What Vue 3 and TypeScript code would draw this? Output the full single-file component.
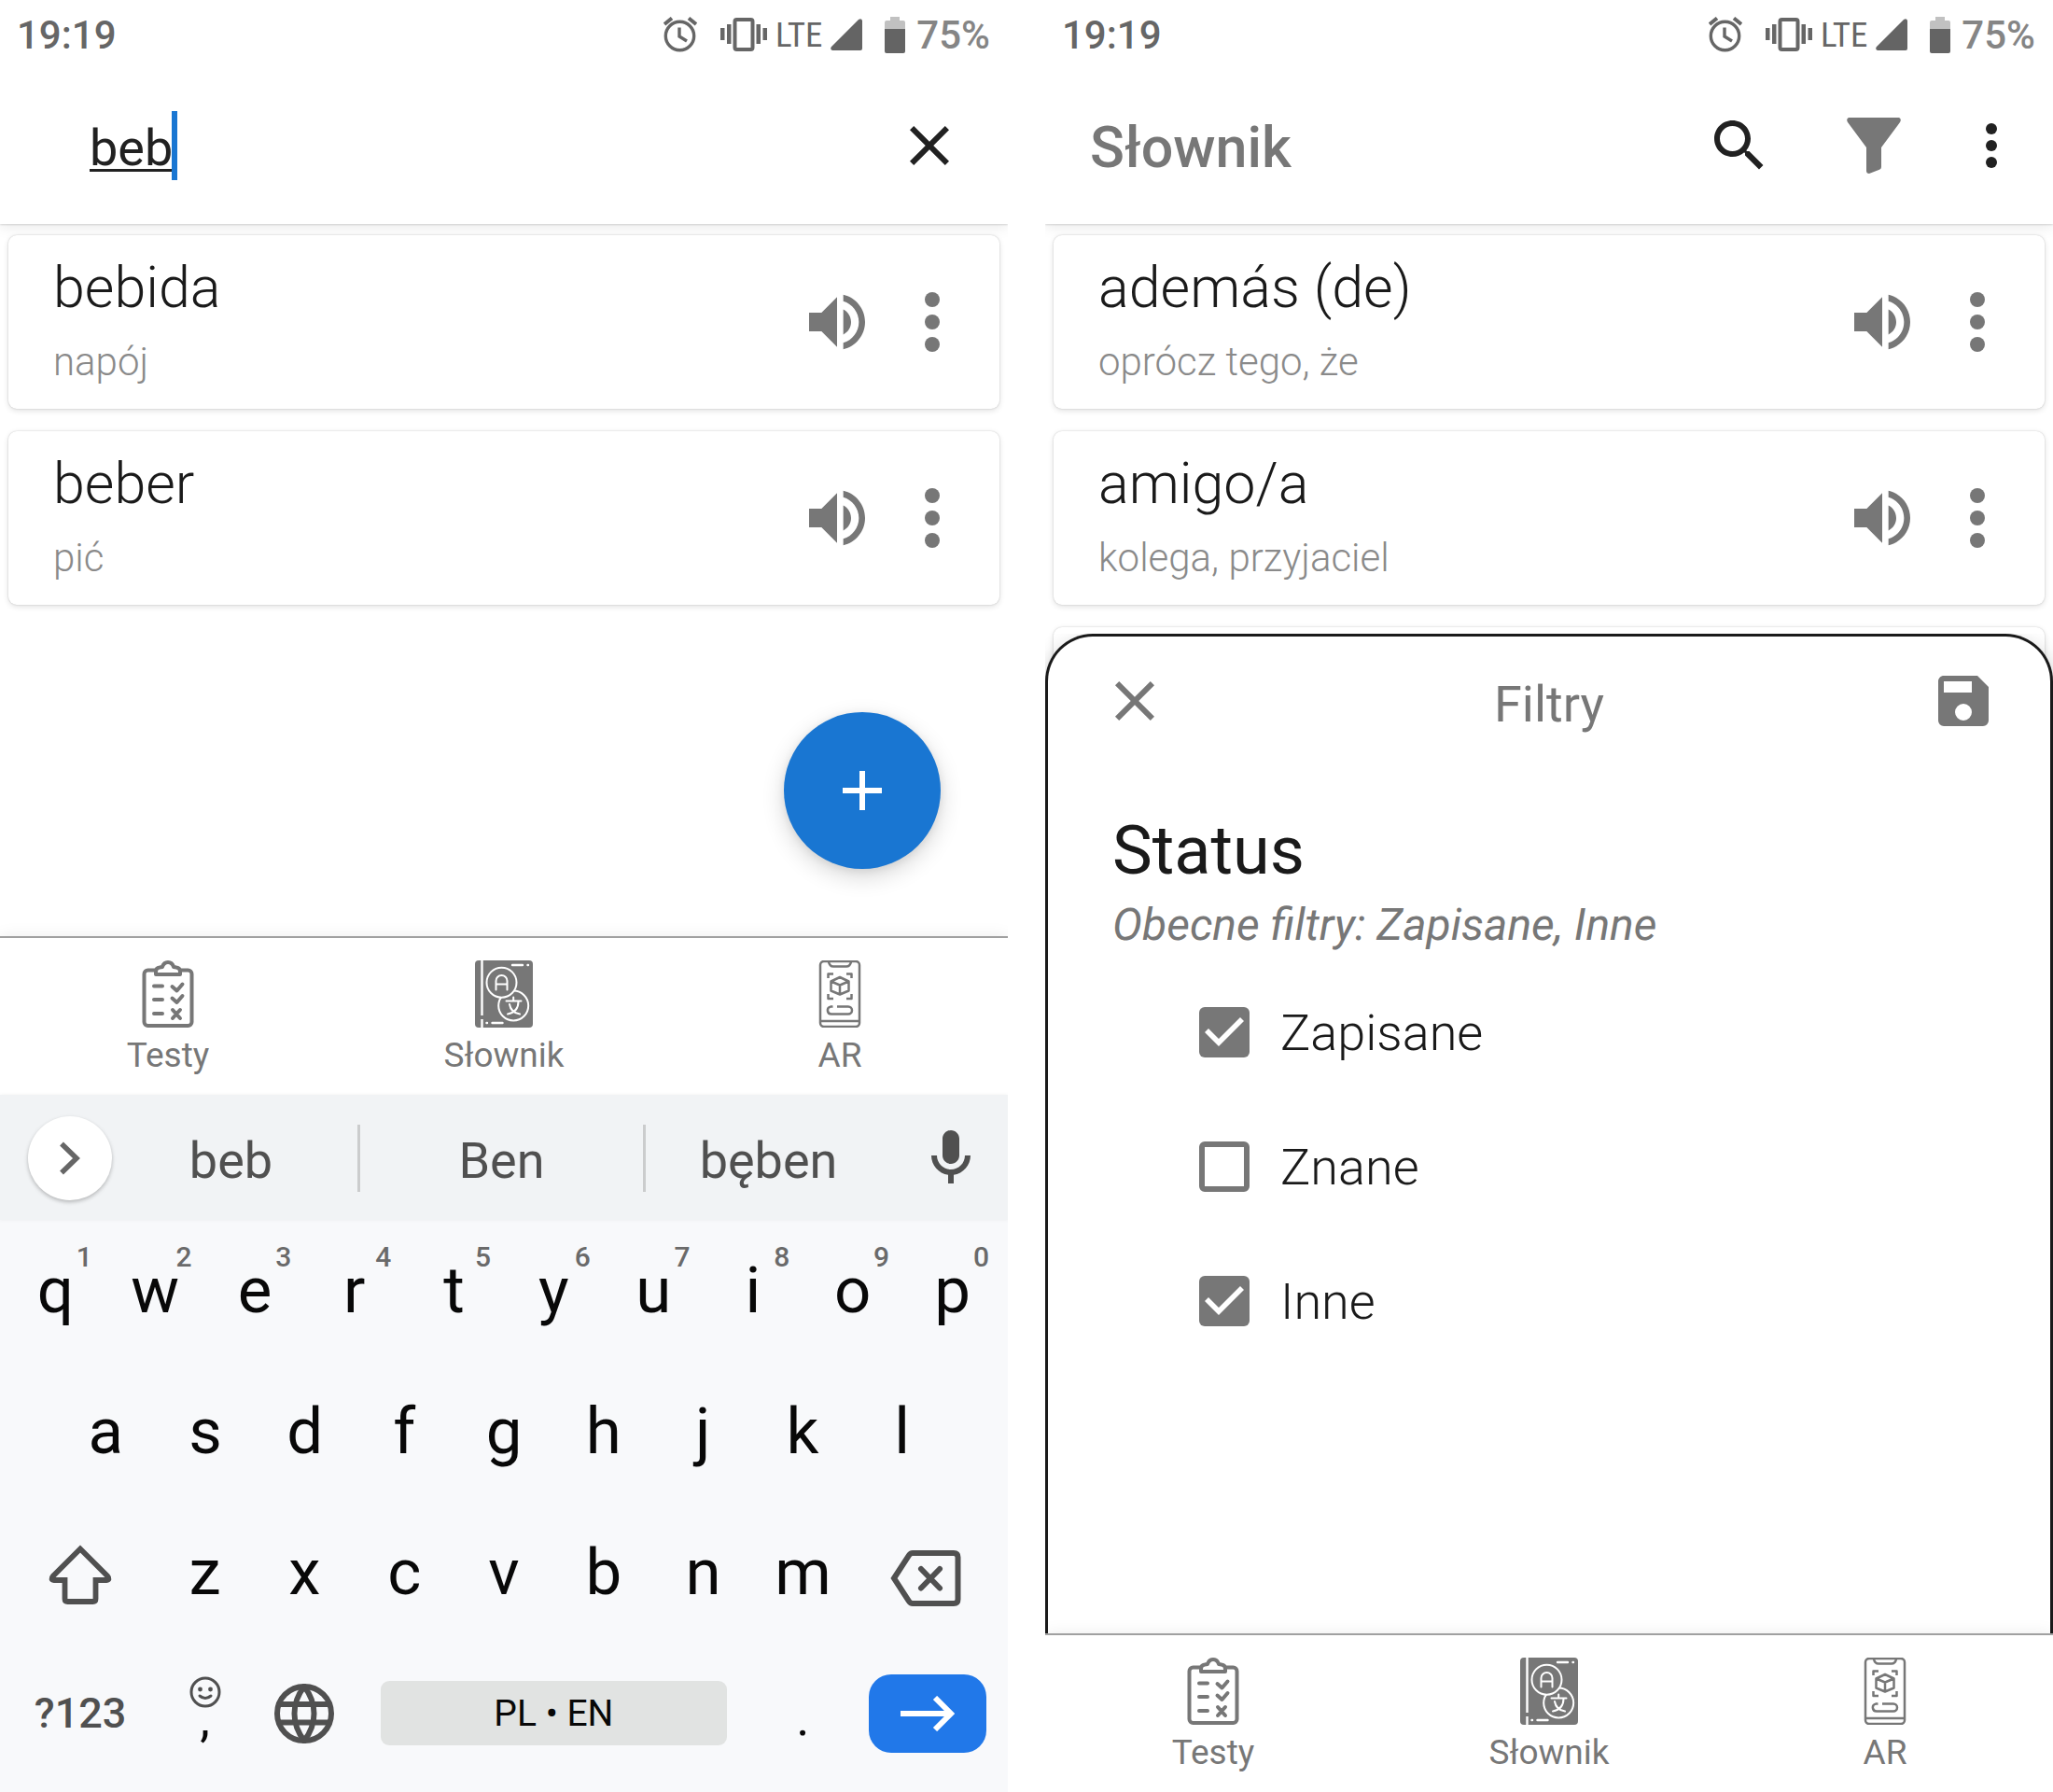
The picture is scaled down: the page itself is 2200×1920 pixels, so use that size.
<script setup lang="ts">
import { ref, computed } from 'vue'

interface Entry {
  word: string
  meaning: string
}

interface Filter {
  id: string
  label: string
  on: boolean
}

interface Screen {
  id: string
  searching: boolean
  entries: Entry[]
}

const screens: Screen[] = [
  {
    id: 'search',
    searching: true,
    entries: [
      { word: 'bebida', meaning: 'napój' },
      { word: 'beber', meaning: 'pić' },
    ],
  },
  {
    id: 'filters',
    searching: false,
    entries: [
      { word: 'además (de)', meaning: 'oprócz tego, że' },
      { word: 'amigo/a', meaning: 'kolega, przyjaciel' },
      { word: '', meaning: '' },
    ],
  },
]

const tabs = ['Testy', 'Słownik', 'AR']
const query = ref('beb')
const suggestions = ['beb', 'Ben', 'bęben']
const topRow = 'qwertyuiop'.split('')
const middleRow = 'asdfghjkl'.split('')
const bottomRow = 'zxcvbnm'.split('')

const filters = ref<Filter[]>([
  { id: 'saved', label: 'Zapisane', on: true },
  { id: 'known', label: 'Znane', on: false },
  { id: 'other', label: 'Inne', on: true },
])

const activeFilters = computed(() =>
  filters.value.filter((f) => f.on).map((f) => f.label).join(', '),
)
</script>

<template>
  <main class="page">
    <section v-for="screen in screens" :key="screen.id" class="phone">
      <div class="status-bar">
        <span class="clock">19:19</span>
        <svg class="alarm" width="36" height="38" viewBox="0 0 36 38" fill="none" stroke="#666" stroke-width="3.4">
          <circle cx="17.500" cy="20.500" r="15.200" />
          <path d="M17 11.500V21l8 5" />
          <path d="M1 8l8-6.500M35 8l-8-6.500" stroke-width="4" />
        </svg>
        <svg class="vibrate" width="50" height="36" viewBox="0 0 50 36">
          <rect x="15.500" y="2" width="19" height="32" rx="2" fill="none" stroke="#666" stroke-width="4" />
          <path d="M7 7h4.500v21H7zM38.500 7H43v21h-4.500zM0 11h4.500v13H0zM45.500 11H50v13h-4.500z" fill="#666" />
        </svg>
        <span class="network">LTE</span>
        <svg class="signal" width="34" height="34" viewBox="0 0 34 34">
          <path d="M2 34q-3-1-1-4L30 1q3-2 4 1v30q0 2-2 2z" fill="#646464" />
        </svg>
        <svg class="battery" width="22" height="39" viewBox="0 0 22 39">
          <path d="M6 0h10v4h4q2 0 2 2v8H0V6q0-2 2-2h4z" fill="#c1c1c1" />
          <path d="M0 13h22v24q0 2-2 2H2q-2 0-2-2z" fill="#646464" />
        </svg>
        <span class="charge">75%</span>
      </div>

      <header class="toolbar">
        <template v-if="screen.searching">
          <div class="search">
            <input v-model="query" type="text" aria-label="Szukaj" spellcheck="false" />
            <i class="caret"></i>
          </div>
          <button class="action" type="button" aria-label="Wyczyść">
            <svg width="72" height="72" viewBox="0 0 24 24" fill="#212121">
              <path d="M19 6.410L17.590 5 12 10.590 6.410 5 5 6.410 10.590 12 5 17.590 6.410 19 12 13.410 17.590 19 19 17.590 13.410 12z" />
            </svg>
          </button>
        </template>
        <template v-else>
          <h1>Słownik</h1>
          <button class="action" type="button" aria-label="Szukaj">
            <svg width="72" height="72" viewBox="0 0 24 24" fill="#212121">
              <path d="M15.500 14h-.79l-.28-.27C15.410 12.590 16 11.110 16 9.500 16 5.910 13.090 3 9.500 3S3 5.910 3 9.500 5.910 16 9.500 16c1.610 0 3.090-.59 4.230-1.570l.27.28v.79l5 4.990L20.490 19l-4.990-5zm-6 0C7.010 14 5 11.990 5 9.500S7.010 5 9.500 5 14 7.010 14 9.500 11.990 14 9.500 14z" />
            </svg>
          </button>
          <button class="action" type="button" aria-label="Filtry">
            <svg width="60" height="60" viewBox="0 0 60 60" fill="#777">
              <path d="M3 0H57q3 1.500 1 5L38 32V53q0 2-2 2.800L25 60q-3 0-3-3V32L2 5Q0 1.500 3 0z" />
            </svg>
          </button>
          <button class="action narrow" type="button" aria-label="Więcej">
            <svg width="72" height="72" viewBox="0 0 24 24" fill="#212121">
              <circle cx="12" cy="6" r="2" /><circle cx="12" cy="12" r="2" /><circle cx="12" cy="18" r="2" />
            </svg>
          </button>
        </template>
      </header>

      <div class="content">
        <ul class="entries">
          <li v-for="(entry, n) in screen.entries" :key="n" class="entry">
            <template v-if="entry.word">
              <div class="words">
                <span class="word">{{ entry.word }}</span>
                <span class="meaning">{{ entry.meaning }}</span>
              </div>
              <button type="button" aria-label="Odtwórz">
                <svg width="80" height="80" viewBox="0 0 24 24" fill="#777">
                  <path d="M3 9v6h4l5 5V4L7 9H3zm13.500 3c0-1.770-1.020-3.290-2.500-4.030v8.050c1.480-.73 2.500-2.250 2.500-4.020zM14 3.230v2.060c2.890.86 5 3.540 5 6.710s-2.110 5.850-5 6.710v2.060c4.010-.91 7-4.490 7-8.770s-2.990-7.860-7-8.770z" />
                </svg>
              </button>
              <button type="button" aria-label="Więcej">
                <svg width="96" height="96" viewBox="0 0 24 24" fill="#777">
                  <circle cx="12" cy="6" r="2" /><circle cx="12" cy="12" r="2" /><circle cx="12" cy="18" r="2" />
                </svg>
              </button>
            </template>
          </li>
        </ul>

        <button v-if="screen.searching" class="fab" type="button" aria-label="Dodaj">
          <svg width="42" height="42" viewBox="0 0 42 42" fill="#fff"><path d="M18 0h6v18h18v6H24v18h-6V24H0v-6h18z" /></svg>
        </button>

        <div v-else class="sheet-frame">
          <section class="sheet">
            <div class="sheet-head">
              <button type="button" aria-label="Zamknij">
                <svg width="72" height="72" viewBox="0 0 24 24" fill="#777">
                  <path d="M19 6.410L17.590 5 12 10.590 6.410 5 5 6.410 10.590 12 5 17.590 6.410 19 12 13.410 17.590 19 19 17.590 13.410 12z" />
                </svg>
              </button>
              <h2>Filtry</h2>
              <button type="button" aria-label="Zapisz">
                <svg width="72" height="72" viewBox="0 0 24 24" fill="#777">
                  <path d="M15,9H5V5H15M12,19A3,3 0 0,1 9,16A3,3 0 0,1 12,13A3,3 0 0,1 15,16A3,3 0 0,1 12,19M17,3H5C3.890,3 3,3.900 3,5V19A2,2 0 0,0 5,21H19A2,2 0 0,0 21,19V7L17,3Z" />
                </svg>
              </button>
            </div>
            <h3>Status</h3>
            <p class="current">Obecne filtry: {{ activeFilters }}</p>
            <label v-for="filter in filters" :key="filter.id" class="option" :for="filter.id">
              <input :id="filter.id" v-model="filter.on" type="checkbox" />
              <span>{{ filter.label }}</span>
            </label>
          </section>
        </div>
      </div>

      <nav class="tabs">
        <a v-for="tab in tabs" :key="tab" href="#">
          <svg v-if="tab === 'Testy'" width="72" height="72" viewBox="0 0 72 72" fill="none" stroke="#777" stroke-width="4" stroke-linecap="round" stroke-linejoin="round">
            <rect x="10.500" y="10.500" width="51" height="59.500" rx="4" />
            <path d="M23 15V12q0-4 4-4.500l3-.5q1.500-5 6-5t6 5l3 .5q4 .5 4 4.500v3z" fill="#fff" />
            <path d="M21 27.500h9M21 42h9M21 57h9M40.500 28l5 4.500 6-7M40.500 40.500l5 4.500 6-7M41 53l8 9m0-9l-8 9" />
          </svg>
          <svg v-else-if="tab === 'Słownik'" width="72" height="72" viewBox="0 0 72 72" fill="none" stroke="#fff" stroke-width="2" stroke-linecap="round" stroke-linejoin="round">
            <rect x="5" y="0" width="62" height="72" rx="4" fill="#777" stroke="none" />
            <path d="M12.500 0V59M12.500 63V72" stroke-linecap="butt" stroke-width="2.400" />
            <circle cx="46.200" cy="48.500" r="16" />
            <circle cx="33.500" cy="23.700" r="16" fill="#777" />
            <path d="M27.500 31.500V22a6 6 0 0 1 12 0v9.500M27.500 25.500h12M46.200 39.500v4M38.500 43.500h16M51.500 44c0 7-4 12-11.500 13.500M42 47c1 6 4.500 9.500 11 10.500" />
            <path d="M45 5h11M61.500 5h.5M17.500 67h.5M23.500 67h11" stroke-width="2.400" />
          </svg>
          <svg v-else width="72" height="72" viewBox="0 0 72 72" fill="none" stroke="#777" stroke-width="2.500" stroke-linejoin="round">
            <rect x="15" y="1" width="42" height="70" rx="4" />
            <path d="M24 1.500q1 5 5 5h14q4 0 5-5M15 65h42" />
            <path d="M23.500 19v-4.500H29M43 14.500h5.500V19M23.500 36v5H29M43 41h5.500V36" />
            <path d="M36 18l9.500 4.500v10L36 36.500l-9.500-4v-10zM26.500 22.500L36 26.500l9.500-4M36 26.500v10" />
            <path d="M33 49.500h12a4 4 0 0 1 0 8H27a4 4 0 0 1-1-7.900l2.500-.1" />
          </svg>
          <span>{{ tab }}</span>
        </a>
      </nav>

      <div v-if="screen.searching" class="keyboard">
        <div class="suggest">
          <button class="expand" type="button" aria-label="Rozwiń">
            <svg width="24" height="36" viewBox="0 0 24 36" fill="none" stroke="#666" stroke-width="5.500"><path d="M3 2.500L19 18 3 33.500" /></svg>
          </button>
          <button v-for="text in suggestions" :key="text" class="hint" type="button">{{ text }}</button>
          <button class="mic" type="button" aria-label="Mów">
            <svg width="72" height="72" viewBox="0 0 24 24" fill="#505050">
              <path d="M12 14c1.660 0 3-1.340 3-3V5c0-1.660-1.340-3-3-3S9 3.340 9 5v6c0 1.660 1.340 3 3 3zM17 11c0 2.760-2.240 5-5 5s-5-2.240-5-5H5c0 3.530 2.610 6.430 6 6.920V21h2v-3.080c3.390-.49 6-3.390 6-6.920z" />
            </svg>
          </button>
        </div>
        <div class="row">
          <button v-for="(letter, n) in topRow" :key="letter" class="key" type="button">
            {{ letter }}<sup>{{ (n + 1) % 10 }}</sup>
          </button>
        </div>
        <div class="row inset">
          <button v-for="letter in middleRow" :key="letter" class="key" type="button">{{ letter }}</button>
        </div>
        <div class="row">
          <button class="key wide" type="button" aria-label="Shift">
            <svg width="68" height="68" viewBox="0 -4 68 68" fill="none" stroke="#505050" stroke-width="5.800">
              <path d="M34 4.500L5 33.500q-3.500 4 1 4.500H17.500V58q0 3 3 3h27q3 0 3-3V38H62q4.500-.5 1-4.500z" />
            </svg>
          </button>
          <button v-for="letter in bottomRow" :key="letter" class="key" type="button">{{ letter }}</button>
          <button class="key wide" type="button" aria-label="Usuń">
            <svg width="80" height="72" viewBox="0 -12 80 72" fill="none" stroke="#505050" stroke-width="6">
              <path d="M4 30L20 5.500Q21.500 3 24 3H68q4.500 0 4.500 4.500V52.500q0 4.500-4.500 4.500H24q-2.500 0-4-2.500z" />
              <path d="M33 20l20 20.500M53 20L33 40.500" stroke-linecap="round" />
            </svg>
          </button>
        </div>
        <div class="row bottom">
          <button class="key symbols" type="button">?123</button>
          <button class="key mark emoji" type="button">
            <svg width="34" height="34" viewBox="0 0 34 34" fill="none" stroke="#505050" stroke-width="3">
              <circle cx="17" cy="17" r="15" />
              <path d="M11 21q6 5 12 0" stroke-linecap="round" />
              <circle cx="11.500" cy="14" r="2.400" fill="#505050" stroke="none" />
              <circle cx="22.500" cy="14" r="2.400" fill="#505050" stroke="none" />
            </svg>
            <span>,</span>
          </button>
          <button class="key" type="button" aria-label="Język">
            <svg width="64" height="64" viewBox="0 0 64 64" fill="none" stroke="#505050" stroke-width="6">
              <circle cx="32" cy="32" r="29" />
              <path d="M32 3C18 21 18 43 32 61C46 43 46 21 32 3zM5 22h54M5 41.500h54" />
            </svg>
          </button>
          <button class="space" type="button">PL • EN</button>
          <button class="key mark" type="button"><span>.</span></button>
          <button class="enter" type="button" aria-label="Enter">
            <svg width="58" height="38" viewBox="0 0 58 38" fill="none" stroke="#fff" stroke-width="6"><path d="M0 19h52M37 2l17 17-17 17" /></svg>
          </button>
        </div>
      </div>
    </section>
  </main>
</template>

<style>
body {
  margin: 0;
  background: #fff;
}
</style>

<style scoped>
.page {
  display: flex;
  gap: 40px;
  min-height: 100vh;
  font-family: Roboto, 'Noto Sans', sans-serif;
  color: #1a1a1a;
}
.page * {
  box-sizing: border-box;
}
button {
  display: flex;
  align-items: center;
  justify-content: center;
  margin: 0;
  padding: 0;
  border: 0;
  background: none;
  font: inherit;
  color: inherit;
}
svg {
  display: block;
  flex: none;
}
.phone {
  flex: 1 1 0;
  min-width: 0;
  display: flex;
  flex-direction: column;
  overflow: hidden;
}

.status-bar {
  position: relative;
  z-index: 1;
  display: flex;
  align-items: center;
  height: 72px;
  padding: 2px 19px 0 18px;
  background: #fff;
  font-size: 42px;
  font-weight: 500;
  color: #666;
}
.clock {
  flex: 1;
}
.vibrate {
  margin-left: 25px;
}
.network {
  margin: 0 9px;
  font-family: 'Roboto Condensed', Roboto, sans-serif;
  font-size: 37px;
  font-weight: 400;
}
.battery {
  margin: 0 12px 0 24px;
}
.charge {
  color: #858585;
}

.toolbar {
  display: flex;
  align-items: center;
  height: 168px;
  padding: 0 12px 0 48px;
  background: #fff;
  box-shadow: 0 1px 2px rgba(0, 0, 0, 0.14), 0 4px 14px rgba(0, 0, 0, 0.08);
}
.toolbar h1 {
  flex: 1;
  margin: 3px 0 0;
  font-size: 61px;
  font-weight: 500;
  color: #777;
}
.action {
  width: 144px;
  height: 144px;
}
.action.narrow {
  width: 108px;
}
.search {
  flex: 1;
  display: flex;
  align-items: center;
  padding-left: 48px;
}
.search input {
  field-sizing: content;
  height: 74px;
  padding: 4px 0 0;
  border: 0;
  outline: 0;
  background: none;
  font: 400 54px Roboto, sans-serif;
  color: #212121;
  text-decoration: underline;
  text-decoration-thickness: 3px;
  text-underline-offset: 4px;
}
.caret {
  width: 6px;
  height: 74px;
  margin-left: -1px;
  background: #1976d2;
}

.content {
  position: relative;
  flex: 1;
  min-height: 480px;
}
.entries {
  display: flex;
  flex-direction: column;
  gap: 24px;
  margin: 0;
  padding: 12px 9px;
  list-style: none;
}
.entry {
  display: flex;
  align-items: center;
  height: 186px;
  padding: 0 24px 0 48px;
  gap: 14px;
  border-radius: 9px;
  background: #fff;
  box-shadow: 0 0 2px rgba(0, 0, 0, 0.2), 0 2px 6px rgba(0, 0, 0, 0.12);
}
.words {
  flex: 1;
  display: flex;
  flex-direction: column;
  gap: 22px;
  padding-bottom: 4px;
  font-weight: 300;
}
.word {
  font-size: 61px;
  line-height: 68px;
}
.meaning {
  font-size: 42px;
  line-height: 48px;
  color: #8a8a8a;
}

.fab {
  position: absolute;
  right: 72px;
  bottom: 72px;
  width: 168px;
  height: 168px;
  border-radius: 50%;
  background: #1976d2;
  box-shadow: 0 8px 24px rgba(0, 0, 0, 0.16), 0 2px 8px rgba(0, 0, 0, 0.08);
}

.sheet-frame {
  position: absolute;
  top: 439px;
  right: 0;
  bottom: 0;
  left: 0;
  overflow: hidden;
}
.sheet {
  height: 100%;
  padding: 33px 57px 0;
  border: 3px solid #1a1a1a;
  border-bottom: 0;
  border-radius: 51px 51px 0 0;
  background: #fff;
  box-shadow: 0 12px 24px rgba(0, 0, 0, 0.3);
}
.sheet-head {
  display: flex;
  align-items: center;
  justify-content: space-between;
  height: 72px;
  color: #777;
}
.sheet h2 {
  margin: 6px 0 0;
  font-size: 54px;
  font-weight: 400;
}
.sheet h3 {
  margin: 81px 12px 0;
  font-size: 72px;
  font-weight: 400;
  line-height: 88px;
}
.current {
  margin: 5px 12px 13px;
  font-size: 48px;
  font-style: italic;
  line-height: 60px;
  color: #777;
}
.option {
  display: flex;
  align-items: center;
  gap: 33px;
  height: 144px;
  padding-left: 105px;
  font-size: 54px;
  font-weight: 300;
}
.option input {
  appearance: none;
  flex: none;
  width: 54px;
  height: 54px;
  margin: 0;
  border: 6px solid #777;
  border-radius: 6px;
}
.option input:checked {
  border: 0;
  background: #777;
}
.option input:checked::before {
  content: '';
  display: block;
  height: 54px;
  background: #fff;
  clip-path: polygon(21px 42px, 6px 27px, 10px 23px, 21px 34px, 44px 11px, 48px 15px);
}

.tabs {
  display: flex;
  height: 170px;
  border-top: 2px solid #a0a0a0;
  background: #fff;
  box-shadow: 0 0 16px rgba(0, 0, 0, 0.08);
  position: relative;
}
.tabs a {
  flex: 1;
  display: flex;
  flex-direction: column;
  align-items: center;
  gap: 9px;
  padding-top: 24px;
  font-size: 37px;
  line-height: 42px;
  color: #777;
  text-decoration: none;
}

.keyboard {
  position: relative;
  padding-bottom: 9px;
  background: #f8f9fb;
  color: #080808;
}
.suggest {
  display: grid;
  grid-template-columns: minmax(0, 112fr) 274fr 306fr 266fr 122fr;
  align-items: center;
  height: 134px;
  padding-top: 2px;
  background: #f1f3f5;
  box-shadow: 0 0 4px rgba(0, 0, 0, 0.06);
}
.expand {
  width: 90px;
  height: 90px;
  margin-left: 30px;
  border-radius: 50%;
  background: #fff;
  box-shadow: 0 2px 4px rgba(0, 0, 0, 0.25);
}
.hint {
  height: 72px;
  padding-top: 4px;
  border-right: 3px solid #cbcccd;
  font-size: 54px;
  color: #505050;
}
.hint:nth-child(4) {
  border-color: transparent;
}
.row {
  display: flex;
  height: 151px;
  padding: 0 6px;
}
.row.inset {
  padding: 0 60px;
}
.row.bottom {
  display: grid;
  grid-template-columns: 3fr 2fr 2fr 8fr 2fr 3fr;
}
.key {
  position: relative;
  flex: 2 1 0;
  min-width: 0;
  font-size: 69px;
}
.key.wide {
  flex-grow: 3;
}
.key sup {
  position: absolute;
  top: 25px;
  right: 14px;
  font-size: 30px;
  font-weight: 500;
  line-height: 30px;
  color: #6a6a6a;
}
.key.symbols {
  font-size: 45px;
  font-weight: 500;
  color: #505050;
}
.key.mark {
  flex-direction: column;
  justify-content: flex-start;
  padding-top: 69px;
  font-size: 54px;
  line-height: 24px;
}
.key.mark.emoji {
  padding-top: 36px;
}
.space {
  align-self: center;
  height: 69px;
  margin: 0 28px;
  border-radius: 9px;
  background: #e1e3e2;
  font-size: 39px;
}
.enter {
  align-self: center;
  justify-self: center;
  width: 126px;
  height: 84px;
  border-radius: 24px;
  background: #2178e9;
}
</style>
